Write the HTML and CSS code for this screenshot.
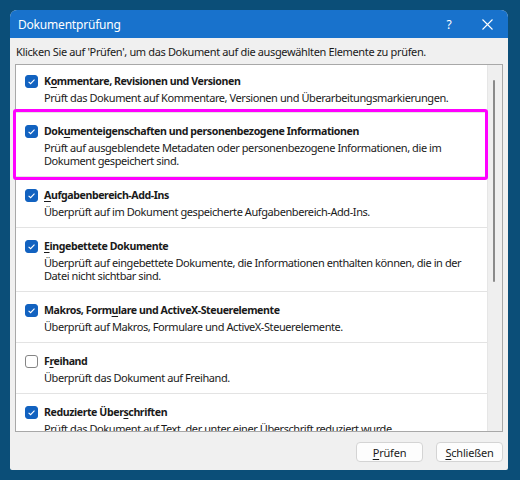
FILE: index.html
```html
<!DOCTYPE html>
<html lang="de">
<head>
<meta charset="utf-8">
<title>Dokumentprüfung</title>
<link rel="stylesheet" href="styles.css">
</head>
<body>
<div class="dialog">
  <div class="titlebar">
    <span class="title">Dokumentprüfung</span>
    <span class="help">?</span>
    <span class="close">
      <svg width="11" height="11" viewBox="0 0 11 11"><path d="M0.5 0.5L10.5 10.5M10.5 0.5L0.5 10.5" stroke="#fff" stroke-width="1.1" fill="none"/></svg>
    </span>
  </div>
  <div class="body">
    <p class="intro">Klicken Sie auf 'Prüfen', um das Dokument auf die ausgewählten Elemente zu prüfen.</p>
    <div class="listbox">
      <div class="items">
        <div class="row first">
          <span class="cb checked"><svg viewBox="0 0 13 13"><path d="M3.6 6.8L5.6 8.7L9.5 4.6" stroke="#fff" stroke-width="1.1" fill="none"/></svg></span>
          <div class="text">
            <div class="name">K<u>o</u>mmentare, Revisionen und Versionen</div>
            <div class="desc">Prüft das Dokument auf Kommentare, Versionen und Überarbeitungsmarkierungen.</div>
          </div>
        </div>
        <div class="row">
          <span class="cb checked"><svg viewBox="0 0 13 13"><path d="M3.6 6.8L5.6 8.7L9.5 4.6" stroke="#fff" stroke-width="1.1" fill="none"/></svg></span>
          <div class="text">
            <div class="name">Dok<u>u</u>menteigenschaften und personenbezogene Informationen</div>
            <div class="desc">Prüft auf ausgeblendete Metadaten oder personenbezogene Informationen, die im<br>Dokument gespeichert sind.</div>
          </div>
        </div>
        <div class="row">
          <span class="cb checked"><svg viewBox="0 0 13 13"><path d="M3.6 6.8L5.6 8.7L9.5 4.6" stroke="#fff" stroke-width="1.1" fill="none"/></svg></span>
          <div class="text">
            <div class="name"><u>A</u>ufgabenbereich-Add-Ins</div>
            <div class="desc">Überprüft auf im Dokument gespeicherte Aufgabenbereich-Add-Ins.</div>
          </div>
        </div>
        <div class="row">
          <span class="cb checked"><svg viewBox="0 0 13 13"><path d="M3.6 6.8L5.6 8.7L9.5 4.6" stroke="#fff" stroke-width="1.1" fill="none"/></svg></span>
          <div class="text">
            <div class="name"><u>E</u>ingebettete Dokumente</div>
            <div class="desc">Überprüft auf eingebettete Dokumente, die Informationen enthalten können, die in der<br>Datei nicht sichtbar sind.</div>
          </div>
        </div>
        <div class="row">
          <span class="cb checked"><svg viewBox="0 0 13 13"><path d="M3.6 6.8L5.6 8.7L9.5 4.6" stroke="#fff" stroke-width="1.1" fill="none"/></svg></span>
          <div class="text">
            <div class="name">Makros, Form<u>u</u>lare und ActiveX-Steuerelemente</div>
            <div class="desc">Überprüft auf Makros, Formulare und ActiveX-Steuerelemente.</div>
          </div>
        </div>
        <div class="row">
          <span class="cb"></span>
          <div class="text">
            <div class="name">F<u>r</u>eihand</div>
            <div class="desc">Überprüft das Dokument auf Freihand.</div>
          </div>
        </div>
        <div class="row">
          <span class="cb checked"><svg viewBox="0 0 13 13"><path d="M3.6 6.8L5.6 8.7L9.5 4.6" stroke="#fff" stroke-width="1.1" fill="none"/></svg></span>
          <div class="text">
            <div class="name">Reduzierte Über<u>s</u>chriften</div>
            <div class="desc">Prüft das Dokument auf Text, der unter einer Überschrift reduziert wurde.</div>
          </div>
        </div>
      </div>
      <div class="scrollbar"><div class="thumb"></div></div>
    </div>
    <div class="footer">
      <button class="btn"><u>P</u>rüfen</button>
      <button class="btn"><u>S</u>chließen</button>
    </div>
  </div>
</div>
<div class="highlight"></div>
</body>
</html>
```

FILE: styles.css
```css
html, body {
  margin: 0;
  padding: 0;
}
body {
  width: 520px;
  height: 480px;
  background: #0b4e78;
  font-family: "Noto Sans", "Open Sans", sans-serif;
  font-size: 11px;
  letter-spacing: -0.35px;
  color: #1a1a1a;
  position: relative;
  overflow: hidden;
}
.dialog {
  position: relative;
  margin: 10px 0 0 10px;
  width: 498px;
  height: 460px;
  background: #f0f0f0;
  border-radius: 7px 7px 2px 2px;
  overflow: hidden;
  display: flex;
  flex-direction: column;
}
.titlebar {
  height: 28px;
  flex: none;
  background: #1872cc;
  color: #fff;
  display: flex;
  align-items: center;
  padding-left: 8px;
  font-size: 12px;
  letter-spacing: -0.2px;
}
.title {
  flex: 1;
}
.help {
  width: 16px;
  text-align: center;
  font-size: 12px;
  margin-right: 25px;
}
.close {
  width: 11px;
  height: 11px;
  display: flex;
  margin-right: 15px;
}
.body {
  flex: 1;
  display: flex;
  flex-direction: column;
  padding: 0 5px 0 5px;
}
.intro {
  margin: 7px 0 0 1px;
  height: 14px;
  line-height: 14px;
  white-space: nowrap;
}
.listbox {
  margin-top: 5px;
  height: 366px;
  border: 1px solid #a8a8a8;
  background: #fff;
  display: flex;
}
.items {
  flex: 1;
  overflow: hidden;
}
.row {
  display: flex;
  align-items: flex-start;
  border-top: 1px solid #e3e3e3;
  padding: 10px 8px 9px 9px;
}
.row.first {
  border-top: none;
  padding-top: 8px;
  padding-bottom: 8px;
}
.cb {
  flex: none;
  width: 13px;
  height: 13px;
  box-sizing: border-box;
  margin-top: 1.5px;
  margin-right: 6px;
  border: 1px solid #858585;
  border-radius: 3px;
  background: #fff;
  display: flex;
}
.cb.checked {
  background: #1262c0;
  border-color: #1262c0;
}
.cb svg {
  width: 13px;
  height: 13px;
  margin: -1px;
}
.text {
  white-space: nowrap;
}
.name {
  font-weight: bold;
  font-size: 10.6px;
  line-height: 16px;
  letter-spacing: -0.42px;
}
.desc {
  margin-top: 2px;
  line-height: 13px;
  letter-spacing: -0.42px;
}
u {
  text-decoration: underline;
  text-underline-offset: 2px;
}
.scrollbar {
  flex: none;
  width: 14px;
  background: #efefef;
  border-left: 1px solid #e6e6e6;
  position: relative;
}
.thumb {
  position: absolute;
  left: 5px;
  top: 15px;
  width: 2px;
  height: 202px;
  border-radius: 1px;
  background: #8a8a8a;
}
.footer {
  display: flex;
  justify-content: flex-end;
  gap: 13px;
  margin-top: 10px;
  padding-right: 0;
}
.btn {
  width: 67px;
  height: 20px;
  padding: 0;
  font-family: inherit;
  font-size: 11px;
  letter-spacing: -0.2px;
  color: #1a1a1a;
  background: #fdfdfd;
  border: 1px solid #d4d4d4;
  border-radius: 4px;
}
.highlight {
  position: absolute;
  left: 13px;
  top: 109px;
  width: 475px;
  height: 71px;
  box-sizing: border-box;
  border: 3px solid #ff00ff;
  border-radius: 3px;
}
```
